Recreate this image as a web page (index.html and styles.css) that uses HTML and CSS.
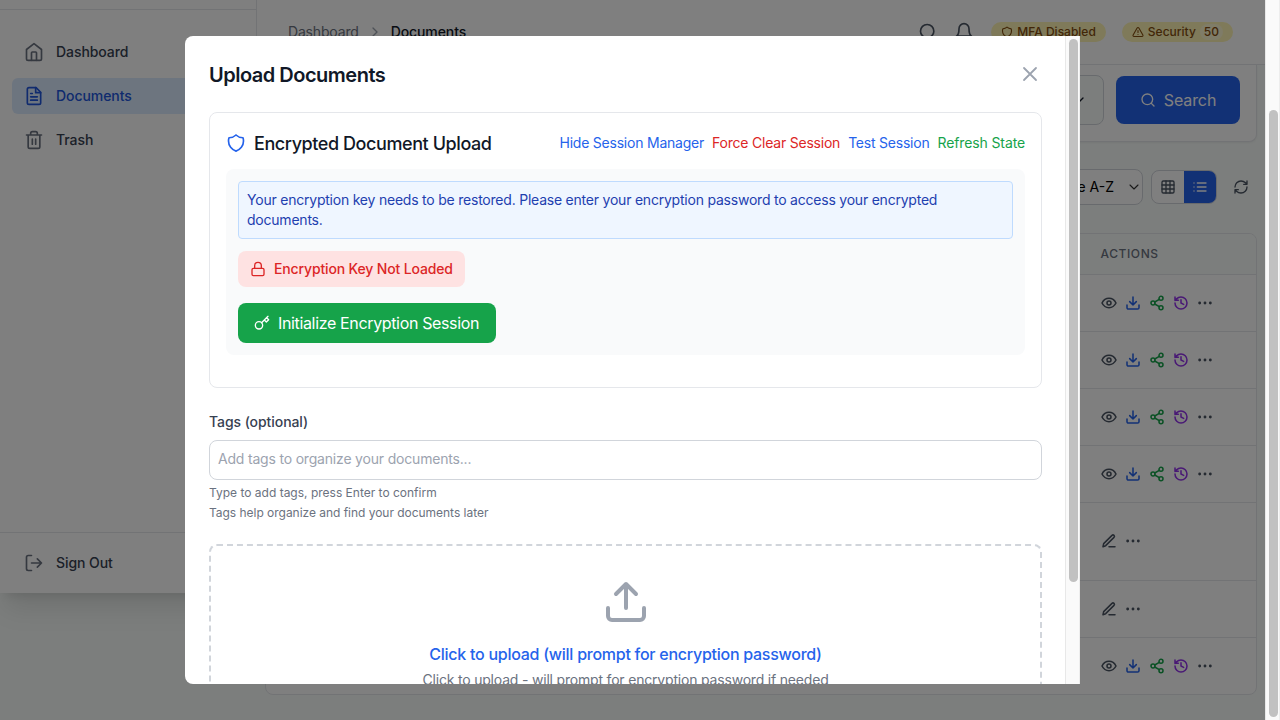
FILE: index.html
```html
<!DOCTYPE html>
<html lang="en">
<head>
<meta charset="utf-8">
<title>Documents</title>
<link rel="stylesheet" href="styles.css">
</head>
<body>
<svg class="sprite" aria-hidden="true">
  <symbol id="home" viewBox="0 0 24 24"><path d="M3 9l9-7 9 7v11a2 2 0 0 1-2 2H5a2 2 0 0 1-2-2z"/><path d="M9 22v-9a1 1 0 0 1 1-1h4a1 1 0 0 1 1 1v9"/></symbol>
  <symbol id="file" viewBox="0 0 24 24"><path d="M14.500 2H6a2 2 0 0 0-2 2v16a2 2 0 0 0 2 2h12a2 2 0 0 0 2-2V7.500z"/><path d="M14 2v6h6M16 13H8M16 17H8M10 9H8"/></symbol>
  <symbol id="trash" viewBox="0 0 24 24"><path d="M3 6h18M19 6v14a2 2 0 0 1-2 2H7a2 2 0 0 1-2-2V6M8 6V4a2 2 0 0 1 2-2h4a2 2 0 0 1 2 2v2M10 11v6M14 11v6"/></symbol>
  <symbol id="logout" viewBox="0 0 24 24"><path d="M9 21H5a2 2 0 0 1-2-2V5a2 2 0 0 1 2-2h4M16 17l5-5-5-5M21 12H9"/></symbol>
  <symbol id="search" viewBox="0 0 24 24"><circle cx="11" cy="11" r="8"/><path d="M21 21l-4.300-4.300"/></symbol>
  <symbol id="bell" viewBox="0 0 24 24"><path d="M6 8a6 6 0 0 1 12 0c0 7 3 9 3 9H3s3-2 3-9M10.300 21a1.940 1.940 0 0 0 3.400 0"/></symbol>
  <symbol id="shield" viewBox="0 0 24 24"><path d="M12 2.400A12 12 0 0 1 3.600 5.700 12 12 0 0 0 3 9.700c0 5.600 3.800 10.500 9 12 5.200-1.500 9-6.400 9-12 0-1.400-.2-2.700-.6-4A12 12 0 0 1 12 2.400z"/></symbol>
  <symbol id="alert" viewBox="0 0 24 24"><path d="M21.730 18l-8-14a2 2 0 0 0-3.480 0l-8 14A2 2 0 0 0 4 21h16a2 2 0 0 0 1.730-3M12 9v4M12 17h.01"/></symbol>
  <symbol id="right" viewBox="0 0 24 24"><path d="M9 18l6-6-6-6"/></symbol>
  <symbol id="down" viewBox="0 0 24 24"><path d="M6 9l6 6 6-6"/></symbol>
  <symbol id="x" viewBox="0 0 24 24"><path d="M18 6L6 18M6 6l12 12"/></symbol>
  <symbol id="grid" viewBox="0 0 24 24"><rect x="3" y="3" width="18" height="18" rx="2"/><path d="M3 9h18M3 15h18M9 3v18M15 3v18"/></symbol>
  <symbol id="list" viewBox="0 0 24 24"><path d="M8 6h13M8 12h13M8 18h13M3 6h.01M3 12h.01M3 18h.01"/></symbol>
  <symbol id="refresh" viewBox="0 0 24 24"><path d="M3 12a9 9 0 0 1 9-9 9.750 9.750 0 0 1 6.740 2.740L21 8M21 3v5h-5M21 12a9 9 0 0 1-9 9 9.750 9.750 0 0 1-6.740-2.740L3 16M8 16H3v5"/></symbol>
  <symbol id="eye" viewBox="0 0 24 24"><path d="M1.500 12S5 5 12 5s10.500 7 10.500 7-3.500 7-10.500 7S1.500 12 1.500 12z"/><circle cx="12" cy="12" r="3"/></symbol>
  <symbol id="download" viewBox="0 0 24 24"><path d="M21 15v4a2 2 0 0 1-2 2H5a2 2 0 0 1-2-2v-4M7 10l5 5 5-5M12 15V3"/></symbol>
  <symbol id="upload" viewBox="0 0 24 24"><path d="M21 15v4a2 2 0 0 1-2 2H5a2 2 0 0 1-2-2v-4M17 8l-5-5-5 5M12 3v12"/></symbol>
  <symbol id="share" viewBox="0 0 24 24"><circle cx="18" cy="5" r="3"/><circle cx="6" cy="12" r="3"/><circle cx="18" cy="19" r="3"/><path d="M8.590 13.510l6.830 3.980M15.410 6.510l-6.820 3.980"/></symbol>
  <symbol id="history" viewBox="0 0 24 24"><path d="M3 12a9 9 0 1 0 9-9 9.750 9.750 0 0 0-6.740 2.740L3 8M3 3v5h5M12 7v5l4 2"/></symbol>
  <symbol id="more" viewBox="0 0 24 24"><circle cx="12" cy="12" r="1"/><circle cx="20" cy="12" r="1"/><circle cx="4" cy="12" r="1"/></symbol>
  <symbol id="pen" viewBox="0 0 24 24"><path d="M12 20.500h9M16.500 3.500a2.120 2.120 0 0 1 3 3L7 19l-4 1.500 1-4.500z"/></symbol>
  <symbol id="lock" viewBox="0 0 24 24"><rect x="3" y="11" width="18" height="11" rx="2"/><path d="M7 11V7a5 5 0 0 1 10 0v4"/></symbol>
  <symbol id="key" viewBox="0 0 24 24"><circle cx="7.500" cy="15.500" r="5.500"/><path d="M21 2l-9.600 9.600M15.500 7.500l3 3L22 7l-3-3"/></symbol>
</svg>

<div class="app">
  <aside class="sidebar">
    <div class="brand"></div>
    <nav class="nav">
      <a class="nav-item"><svg class="i20"><use href="#home"/></svg>Dashboard</a>
      <a class="nav-item active"><svg class="i20"><use href="#file"/></svg>Documents</a>
      <a class="nav-item"><svg class="i20"><use href="#trash"/></svg>Trash</a>
    </nav>
    <div class="signout"><a class="nav-item"><svg class="i20"><use href="#logout"/></svg>Sign Out</a></div>
  </aside>
  <div class="main">
    <header class="header">
      <div class="crumbs"><span>Dashboard</span><svg class="i16"><use href="#right"/></svg><b>Documents</b></div>
      <div class="header-tools">
        <svg class="i20"><use href="#search"/></svg>
        <svg class="i20 bell"><use href="#bell"/></svg>
        <span class="badge mfa"><svg class="i12"><use href="#shield"/></svg>MFA Disabled</span>
        <span class="badge security"><svg class="i12"><use href="#alert"/></svg>Security<span class="score">50</span></span>
      </div>
    </header>
    <section class="filters">
      <div class="type-select"><svg class="i16"><use href="#down"/></svg></div>
      <button class="search-btn"><svg class="i16"><use href="#search"/></svg>Search</button>
    </section>
    <div class="toolbar">
      <div class="sort"><span>Name A-Z</span><svg class="i16"><use href="#down"/></svg></div>
      <div class="views"><span><svg class="i16"><use href="#grid"/></svg></span><span class="on"><svg class="i16"><use href="#list"/></svg></span></div>
      <div class="reload"><svg class="i16"><use href="#refresh"/></svg></div>
    </div>
    <section class="table">
      <div class="thead"><span>Actions</span></div>
      <div class="row"><div class="actions"><svg class="i16"><use href="#eye"/></svg><svg class="i16 blue"><use href="#download"/></svg><svg class="i16 green"><use href="#share"/></svg><svg class="i16 purple"><use href="#history"/></svg><svg class="i16"><use href="#more"/></svg></div></div>
      <div class="row"><div class="actions"><svg class="i16"><use href="#eye"/></svg><svg class="i16 blue"><use href="#download"/></svg><svg class="i16 green"><use href="#share"/></svg><svg class="i16 purple"><use href="#history"/></svg><svg class="i16"><use href="#more"/></svg></div></div>
      <div class="row"><div class="actions"><svg class="i16"><use href="#eye"/></svg><svg class="i16 blue"><use href="#download"/></svg><svg class="i16 green"><use href="#share"/></svg><svg class="i16 purple"><use href="#history"/></svg><svg class="i16"><use href="#more"/></svg></div></div>
      <div class="row"><div class="actions"><svg class="i16"><use href="#eye"/></svg><svg class="i16 blue"><use href="#download"/></svg><svg class="i16 green"><use href="#share"/></svg><svg class="i16 purple"><use href="#history"/></svg><svg class="i16"><use href="#more"/></svg></div></div>
      <div class="row tall"><div class="actions"><svg class="i16"><use href="#pen"/></svg><svg class="i16"><use href="#more"/></svg></div></div>
      <div class="row"><div class="actions"><svg class="i16"><use href="#pen"/></svg><svg class="i16"><use href="#more"/></svg></div></div>
      <div class="row"><div class="actions"><svg class="i16"><use href="#eye"/></svg><svg class="i16 blue"><use href="#download"/></svg><svg class="i16 green"><use href="#share"/></svg><svg class="i16 purple"><use href="#history"/></svg><svg class="i16"><use href="#more"/></svg></div></div>
    </section>
  </div>
</div>
<div class="scrollbar page-bar"><div class="thumb"></div></div>

<div class="overlay">
  <div class="modal">
    <div class="modal-body">
      <div class="modal-head"><h2>Upload Documents</h2><svg class="i24"><use href="#x"/></svg></div>
      <section class="card">
        <div class="card-head">
          <svg class="i20 shield"><use href="#shield"/></svg>
          <h3>Encrypted Document Upload</h3>
          <div class="links"><a class="c-blue">Hide Session Manager</a><a class="c-red">Force Clear Session</a><a class="c-blue">Test Session</a><a class="c-green">Refresh State</a></div>
        </div>
        <div class="session">
          <p class="notice">Your encryption key needs to be restored. Please enter your encryption password to access your encrypted documents.</p>
          <div class="status"><svg class="i16"><use href="#lock"/></svg>Encryption Key Not Loaded</div>
          <button class="init"><svg class="i16"><use href="#key"/></svg>Initialize Encryption Session</button>
        </div>
      </section>
      <label class="label">Tags (optional)</label>
      <div class="input">Add tags to organize your documents...</div>
      <p class="hint">Type to add tags, press Enter to confirm</p>
      <p class="hint second">Tags help organize and find your documents later</p>
      <div class="drop">
        <svg class="i48"><use href="#upload"/></svg>
        <p class="drop-title">Click to upload (will prompt for encryption password)</p>
        <p class="drop-sub">Click to upload - will prompt for encryption password if needed</p>
      </div>
    </div>
    <div class="scrollbar modal-bar"><div class="thumb"></div></div>
  </div>
</div>
</body>
</html>
```
FILE: styles.css
```css
* { box-sizing: border-box; }
body { margin: 0; width: 1280px; height: 720px; overflow: hidden; display: flex; background: #f8fcfa; color: #111827; font: 14px/20px Inter, "Liberation Sans", sans-serif; }
h2, h3, p { margin: 0; }
svg { display: block; flex: none; fill: none; stroke: currentColor; stroke-width: 2; stroke-linecap: round; stroke-linejoin: round; }
.sprite { position: absolute; width: 0; height: 0; }
.i12 { width: 12px; height: 12px; }
.i16 { width: 16px; height: 16px; }
.i20 { width: 20px; height: 20px; }
.i24 { width: 24px; height: 24px; }
.i48 { width: 48px; height: 48px; }

.app { width: 1265px; height: 720px; display: flex; align-items: flex-start; }
.sidebar { width: 257px; height: 593px; display: flex; flex-direction: column; background: #fff; border-right: 1px solid #e5e7eb; box-shadow: 0 20px 25px -5px rgba(0,0,0,.1), 0 8px 10px -6px rgba(0,0,0,.1); }
.brand { height: 10px; border-bottom: 1px solid #e5e7eb; }
.nav { flex: 1; padding: 24px 12px; display: flex; flex-direction: column; gap: 8px; }
.nav-item { height: 36px; padding: 0 12px; display: flex; align-items: center; gap: 12px; border-radius: 6px; font-weight: 500; letter-spacing: -.07px; color: #374151; }
.nav-item svg { color: #6b7280; }
.nav-item.active, .nav-item.active svg { color: #2056dd; }
.nav-item.active { background: #dbeafe; }
.signout { height: 61px; padding: 12px; border-top: 1px solid #e5e7eb; }

.main { flex: 1; height: 720px; }
.header { height: 65px; padding: 0 32px 0 31px; display: flex; align-items: center; justify-content: space-between; background: #fff; border-bottom: 1px solid #e5e7eb; }
.crumbs { display: flex; align-items: center; gap: 8px; color: #6b7280; letter-spacing: -.17px; }
.crumbs svg { color: #9ca3af; }
.crumbs b { font-weight: 500; letter-spacing: -.1px; color: #111827; }
.header-tools { display: flex; align-items: center; gap: 16px; color: #4b5563; }
.bell { margin-right: 1px; }
.badge { height: 20px; display: flex; align-items: center; gap: 4px; padding: 0 10px; border-radius: 10px; background: #fef5b4; color: #854d0e; font-size: 12px; font-weight: 500; line-height: 16px; }
.badge svg { stroke-width: 2.200; }
.score { padding: 0 4px; border-radius: 8px; background: #fff8d0; }

.filters { height: 77px; margin: 0 8px; padding: 11px 16px 0; display: flex; justify-content: flex-end; gap: 12px; background: #fff; border: 1px solid #e5e7eb; border-top: 0; border-radius: 0 0 8px 8px; box-shadow: 0 1px 2px rgba(0,0,0,.05); }
.type-select { width: 210px; height: 50px; margin-top: -1px; padding: 0 16px; display: flex; align-items: center; justify-content: flex-end; border: 1px solid #d1d5db; border-radius: 8px; background: #f8fcfa; }
.search-btn { width: 124px; height: 48px; display: flex; align-items: center; justify-content: center; gap: 8px; border: 0; border-radius: 8px; background: #2563eb; color: #fff; font: 16px/24px Inter, sans-serif; letter-spacing: -.1px; }
.toolbar { height: 90.5px; padding: 27px 8px 0; display: flex; justify-content: flex-end; gap: 8px; }
.sort { width: 120px; height: 36px; padding: 0 0 0 13px; display: flex; align-items: center; justify-content: flex-end; gap: 12px; border: 1px solid #d1d5db; border-radius: 8px; background: #fff; color: #000; }
.sort svg { stroke-width: 1.600; color: #333; }
.views { width: 66px; height: 34px; margin-top: 1px; display: flex; border: 1px solid #d1d5db; border-radius: 8px; overflow: hidden; background: #fff; color: #4b5563; }
.views span { flex: 1; display: flex; align-items: center; justify-content: center; }
.views .on { background: #2563eb; color: #fff; }
.reload { width: 32px; height: 36px; display: flex; align-items: center; justify-content: center; color: #4b5563; }
.table { margin: 0 8px; background: #fff; border: 1px solid #e5e7eb; border-radius: 8px; overflow: hidden; }
.thead { height: 41px; padding-left: 834.5px; display: flex; align-items: center; background: #f8fcfa; border-bottom: 1px solid #e5e7eb; color: #6b7280; font-size: 12px; font-weight: 500; letter-spacing: .6px; text-transform: uppercase; }
.row { height: 57px; padding-left: 834.5px; display: flex; align-items: center; border-bottom: 1px solid #e5e7eb; }
.row.tall { height: 78.5px; }
.row:last-child { height: 56px; border-bottom: 0; }
.actions { display: flex; gap: 8px; color: #4b5563; }
.actions svg { stroke-width: 2.300; }
.blue { color: #2563eb; }
.green { color: #16a34a; }
.purple { color: #9333ea; }

.scrollbar { width: 15px; background: #fafafa; border-left: 1px solid #e8e8e8; border-right: 1px solid #ededed; }
.thumb { width: 9px; margin-left: 3px; border-radius: 5px; background: #c1c1c1; }
.page-bar { height: 720px; padding-top: 110px; }
.page-bar .thumb { height: 607px; }

.overlay { position: absolute; left: 0; top: 0; width: 1265px; height: 720px; display: flex; align-items: center; justify-content: center; background: rgba(0,0,0,.5); }
.modal { width: 895px; height: 648px; display: flex; overflow: hidden; background: #fff; border-radius: 8px 0 0 8px; }
.modal-body { flex: 1; padding: 24px 23px 0 24px; }
.modal-bar { padding-top: 3px; }
.modal-bar .thumb { height: 543px; }
.modal-head { height: 28px; margin-bottom: 24px; display: flex; align-items: center; justify-content: space-between; }
.modal-head h2 { padding-top: 2px; font-size: 20px; line-height: 28px; font-weight: 600; letter-spacing: -.5px; }
.modal-head svg { color: #9ca3af; stroke-width: 1.800; }
.card { height: 276px; padding: 16px; border: 1px solid #e5e7eb; border-radius: 8px; }
.card-head { height: 28px; margin-bottom: 12px; display: flex; align-items: center; gap: 8px; }
.card-head h3 { flex: 1; padding-top: 2px; font-size: 18px; line-height: 28px; font-weight: 500; letter-spacing: -.42px; }
.shield { color: #2563eb; }
.links { display: flex; gap: 8px; letter-spacing: -.22px; }
.c-blue { color: #2563eb; }
.c-red { color: #dc2626; }
.c-green { color: #16a34a; letter-spacing: -.12px; }
.session { height: 186px; padding: 12px; border-radius: 8px; background: #f9fafb; }
.notice { height: 58px; padding: 8px; border: 1px solid #bfdbfe; border-radius: 4px; background: #eff6ff; color: #1e40af; letter-spacing: -.22px; }
.status { width: 227px; height: 36px; margin: 12px 0 16px; padding-left: 12px; display: flex; align-items: center; gap: 8px; border-radius: 8px; background: #fee2e2; color: #dc2626; font-weight: 500; letter-spacing: -.15px; }
.init { width: 257.5px; height: 40px; padding: 0 16px; display: flex; align-items: center; gap: 8px; border: 0; border-radius: 8px; background: #16a34a; color: #fff; font: 16px/24px Inter, sans-serif; letter-spacing: -.35px; white-space: nowrap; }
.label { display: block; margin: 24px 0 8px; font-weight: 500; letter-spacing: -.07px; color: #374151; }
.input { height: 40px; padding: 8px; border: 1px solid #d1d5db; border-radius: 8px; color: #9ca3af; letter-spacing: -.19px; }
.hint { margin-top: 5px; font-size: 12px; line-height: 16px; color: #6b7280; }
.hint.second { margin-top: 4px; letter-spacing: -.03px; }
.drop { height: 220px; margin-top: 23px; padding: 32px; display: flex; flex-direction: column; align-items: center; border: 2px dashed #d1d5db; border-radius: 8px; }
.drop svg { color: #9ca3af; }
.drop-title { margin-top: 16px; font-size: 16px; line-height: 24px; font-weight: 500; letter-spacing: -.26px; color: #2563eb; }
.drop-sub { margin-top: 4px; color: #6b7280; letter-spacing: -.19px; }
```
